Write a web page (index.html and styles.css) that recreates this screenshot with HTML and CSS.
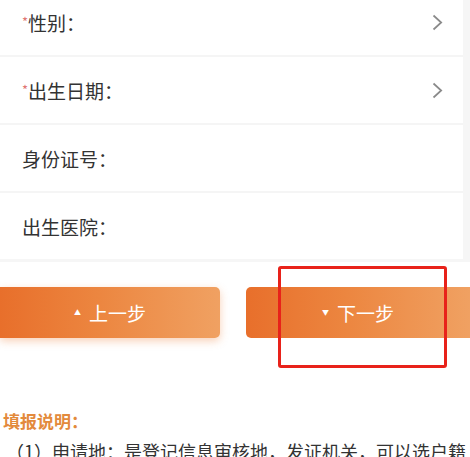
FILE: index.html
```html
<!DOCTYPE html>
<html lang="zh">
<head>
<meta charset="utf-8">
<link rel="stylesheet" href="styles.css">
</head>
<body>
<div class="page">
  <div class="form-wrap">
    <div class="card">
      <div class="row"><span class="label"><span class="req">*</span>性别：</span>
        <svg class="chev" width="11" height="17" viewBox="0 0 11 17"><path d="M1.5 1.5 L9.2 8.5 L1.5 15.5" fill="none" stroke="#8a8a8a" stroke-width="1.7"/></svg></div>
      <div class="row"><span class="label"><span class="req">*</span>出生日期：</span>
        <svg class="chev" width="11" height="17" viewBox="0 0 11 17"><path d="M1.5 1.5 L9.2 8.5 L1.5 15.5" fill="none" stroke="#8a8a8a" stroke-width="1.7"/></svg></div>
      <div class="row"><span class="label">身份证号：</span></div>
      <div class="row last"><span class="label">出生医院：</span></div>
    </div>
  </div>
  <div class="buttons">
    <div class="btn btn-prev"><span class="tri">▲</span>上一步</div>
    <div class="btn btn-next"><span class="tri">▼</span>下一步</div>
    <div class="highlight"></div>
  </div>
  <div class="notes">
    <div class="notes-title">填报说明：</div>
    <div class="notes-line">（1）申请地：是登记信息审核地，发证机关，可以选户籍</div>
  </div>
</div>
</body>
</html>
```
FILE: styles.css
```css
html, body {
  margin: 0;
  padding: 0;
  background: #ffffff;
  font-family: "Noto Sans CJK SC", "Noto Sans", sans-serif;
  overflow: hidden;
}
.page {
  width: 470px;
  height: 457px;
  overflow: hidden;
}
.form-wrap {
  margin-top: -11px;
  background: #f6f6f6;
  padding-bottom: 3px;
}
.card {
  background: #ffffff;
  margin-right: 7px;
}
.row {
  height: 66px;
  border-bottom: 2px solid #f5f5f5;
  display: flex;
  align-items: center;
  justify-content: space-between;
  padding: 0 20px 0 22px;
}
.row.last {
  border-bottom: none;
}
.label {
  font-size: 19px;
  color: #333333;
}
.req {
  color: #d9534f;
  font-size: 13px;
  vertical-align: 4px;
  opacity: 0.8;
}
.chev {
  display: block;
}
.buttons {
  position: relative;
  display: flex;
  justify-content: space-between;
  margin-top: 25px;
  height: 52px;
}
.btn {
  width: 220px;
  height: 51px;
  border-radius: 5px;
  background: linear-gradient(90deg, #e86f2b 0%, #ec8640 45%, #f0a162 100%);
  color: #ffffff;
  font-size: 19px;
  display: flex;
  align-items: center;
  justify-content: center;
}
.btn-prev {
  border-radius: 0 5px 5px 0;
  box-shadow: 0 3px 8px rgba(234, 120, 50, 0.35);
}
.btn-next {
  width: 224px;
  border-radius: 5px 0 0 5px;
}
.tri {
  font-size: 7px;
  margin-right: 8px;
  position: relative;
  top: -1px;
}
.highlight {
  position: absolute;
  left: 278px;
  top: -21px;
  width: 163px;
  height: 96px;
  border: 3px solid #e8221a;
  border-radius: 3px;
}
.notes {
  margin-top: 70px;
  padding-left: 3px;
}
.notes-title {
  font-size: 17px;
  font-weight: bold;
  color: #e38a3c;
  line-height: 24px;
}
.notes-line {
  font-size: 18px;
  color: #333333;
  line-height: 28px;
  margin-top: 4px;
  padding-left: 3px;
  white-space: nowrap;
}
```
